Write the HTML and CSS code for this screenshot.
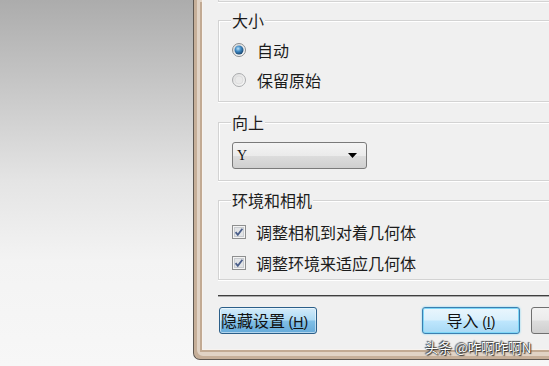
FILE: index.html
```html
<!DOCTYPE html>
<html lang="zh-CN">
<head>
    <meta charset="UTF-8">
    <title>导入设置</title>
    <link rel="stylesheet" href="styles.css">
</head>
<body>
    <div class="stage">
        <div class="window">
            <div class="panel">
                <div class="group-tail"></div>

                <div class="group group-size">
                    <span class="legend">大小</span>
                    <div class="option">
                        <svg class="radio" width="14" height="14" viewBox="0 0 14 14">
                            <defs>
                                <linearGradient id="ring" x1="0" y1="0" x2="1" y2="1">
                                    <stop offset="0" stop-color="#d8d8d8"/>
                                    <stop offset="1" stop-color="#ffffff"/>
                                </linearGradient>
                                <radialGradient id="dot" cx="0.4" cy="0.35" r="0.7">
                                    <stop offset="0" stop-color="#b8e2fa"/>
                                    <stop offset="0.45" stop-color="#3f88c2"/>
                                    <stop offset="1" stop-color="#163f66"/>
                                </radialGradient>
                            </defs>
                            <circle cx="7" cy="7" r="6.5" fill="url(#ring)" stroke="#8c8e90"/>
                            <circle cx="7" cy="7" r="4.5" fill="url(#dot)"/>
                        </svg>
                        <span>自动</span>
                    </div>
                    <div class="option">
                        <svg class="radio" width="14" height="14" viewBox="0 0 14 14">
                            <defs>
                                <linearGradient id="off" x1="0" y1="0" x2="1" y2="1">
                                    <stop offset="0" stop-color="#dcdcdc"/>
                                    <stop offset="1" stop-color="#fafafa"/>
                                </linearGradient>
                            </defs>
                            <circle cx="7" cy="7" r="6.5" fill="url(#off)" stroke="#a9abad"/>
                            <circle cx="7" cy="7" r="4" fill="#e9e9e9" stroke="#dedede"/>
                        </svg>
                        <span>保留原始</span>
                    </div>
                </div>

                <div class="group group-up">
                    <span class="legend">向上</span>
                    <div class="select">
                        <span class="select-value">Y</span>
                        <svg width="9" height="5" viewBox="0 0 9 5"><path d="M0 0H9L4.5 5Z" fill="#000"/></svg>
                    </div>
                </div>

                <div class="group group-env">
                    <span class="legend">环境和相机</span>
                    <div class="check-row">
                        <svg class="check" width="14" height="14" viewBox="0 0 14 14">
                            <rect x="0.5" y="0.5" width="13" height="13" fill="#f4f4f4" stroke="#8e8f8f"/>
                            <rect x="2.5" y="2.5" width="9" height="9" fill="#e2e4e6" stroke="#c9ccd0"/>
                            <path d="M3.6 7.2L5.8 9.8L10.4 3.8" fill="none" stroke="#4a5e8a" stroke-width="1.8"/>
                        </svg>
                        <span>调整相机到对着几何体</span>
                    </div>
                    <div class="check-row">
                        <svg class="check" width="14" height="14" viewBox="0 0 14 14">
                            <rect x="0.5" y="0.5" width="13" height="13" fill="#f4f4f4" stroke="#8e8f8f"/>
                            <rect x="2.5" y="2.5" width="9" height="9" fill="#e2e4e6" stroke="#c9ccd0"/>
                            <path d="M3.6 7.2L5.8 9.8L10.4 3.8" fill="none" stroke="#4a5e8a" stroke-width="1.8"/>
                        </svg>
                        <span>调整环境来适应几何体</span>
                    </div>
                </div>

                <div class="separator"></div>

                <div class="buttons">
                    <button class="btn btn-focus">隐藏设置 <span class="key">(<u>H</u>)</span></button>
                    <button class="btn btn-default">导入 <span class="key">(<u>I</u>)</span></button>
                    <button class="btn btn-plain" aria-label="取消"></button>
                </div>
            </div>
        </div>
    </div>

    <div class="watermark">头条 @咋啊咋啊N</div>
</body>
</html>
```

FILE: styles.css
```css
html, body {
    margin: 0;
    padding: 0;
}
body {
    position: relative;
    width: 549px;
    height: 366px;
    overflow: hidden;
    font-family: "Noto Sans CJK SC", "Liberation Sans", sans-serif;
    color: #1c1c1c;
    background: linear-gradient(to bottom, #acacac 0, #c8c8c8 90px, #e4e4e4 180px, #f3f3f3 260px, #f7f7f7 366px);
}
.stage {
    display: flex;
    padding-left: 193px;
}
.window {
    flex-shrink: 0;
    width: 420px;
    padding: 0 0 9px 8px;
    border-left: 1px solid #5f5851;
    border-bottom: 1px solid #5f5851;
    border-bottom-left-radius: 7px;
    background: #e1d3c5;
    box-shadow: inset 3px -3px 0 #c6af99;
}
.panel {
    padding: 0 0 15px 15px;
    border-left: 1px solid #f7f3ef;
    border-bottom: 1px solid #f7f3ef;
    background: #f0f0f0;
    box-shadow: -2px 2px 0 #c2aa93;
}
.group-tail {
    height: 1px;
    border: 1px solid #d3d3d3;
    border-top: none;
    box-shadow: 0 1px 0 #fff;
}
.group {
    position: relative;
    border: 1px solid #d3d3d3;
    border-right: none;
    box-shadow: inset 1px 1px 0 #fff, 0 1px 0 #fff;
    padding-left: 13px;
}
.legend {
    position: absolute;
    top: -11px;
    left: 12px;
    padding: 0 1px;
    background: #f0f0f0;
    font-size: 16px;
    line-height: 20px;
}
.group-size {
    margin-top: 18px;
    padding-top: 14px;
    padding-bottom: 6px;
}
.group-up {
    margin-top: 20px;
    padding-top: 19px;
    padding-bottom: 11px;
}
.group-env {
    margin-top: 19px;
    padding-top: 15px;
    padding-bottom: 1px;
}
.option {
    display: flex;
    align-items: center;
    gap: 11px;
    height: 30px;
    font-size: 16px;
}
.check-row {
    display: flex;
    align-items: center;
    gap: 10px;
    height: 31px;
    font-size: 16px;
}
.radio, .check {
    flex-shrink: 0;
}
.select {
    display: flex;
    align-items: center;
    justify-content: space-between;
    box-sizing: border-box;
    width: 135px;
    height: 27px;
    padding: 0 9px 0 4px;
    border: 1px solid #7a7a7a;
    border-radius: 3px;
    background: linear-gradient(to bottom, #f4f4f4 0, #ebebeb 50%, #dddddd 51%, #cfcfcf 100%);
}
.select-value {
    font-family: "Liberation Serif", serif;
    font-size: 14px;
    color: #111;
}
.separator {
    margin-top: 15px;
    height: 1px;
    border-top: 1px solid #3f3f3f;
    background: #a9a9a9;
}
.buttons {
    display: flex;
    margin-top: 10px;
    padding-left: 1px;
}
.btn {
    box-sizing: border-box;
    width: 98px;
    height: 27px;
    padding: 0;
    border-radius: 3px;
    font-family: "Noto Sans CJK SC", "Liberation Sans", sans-serif;
    font-size: 16px;
    line-height: 25px;
    color: #111;
    flex-shrink: 0;
}
.key {
    font-family: "Liberation Sans", sans-serif;
    font-size: 14px;
}
.btn-focus {
    text-align: left;
    padding-left: 1px;
    border: 1px solid #2b5f89;
    background: linear-gradient(to bottom, #d3ebfa 0, #addaf4 48%, #80bfe6 52%, #66abda 100%);
    box-shadow: inset 0 0 0 1px rgba(255, 255, 255, 0.5);
}
.btn-default {
    margin-left: 105px;
    border: 1px solid #3c7fb1;
    background: linear-gradient(to bottom, #eaf6fd 0, #d9f0fc 48%, #bee6fd 52%, #a7d9f5 100%);
    box-shadow: 0 0 2px #6cd2f5, inset 0 0 0 1px #7fd7f7;
}
.btn-plain {
    margin-left: 11px;
    border: 1px solid #707070;
    background: linear-gradient(to bottom, #f2f2f2 0, #ebebeb 48%, #dddddd 52%, #cfcfcf 100%);
}
.watermark {
    position: absolute;
    left: 425px;
    top: 338px;
    font-size: 13.5px;
    line-height: 18px;
    color: #fff;
    text-shadow: 0 0 1px #000, 1px 1px 1px #333, -1px -1px 1px #555;
}
```
